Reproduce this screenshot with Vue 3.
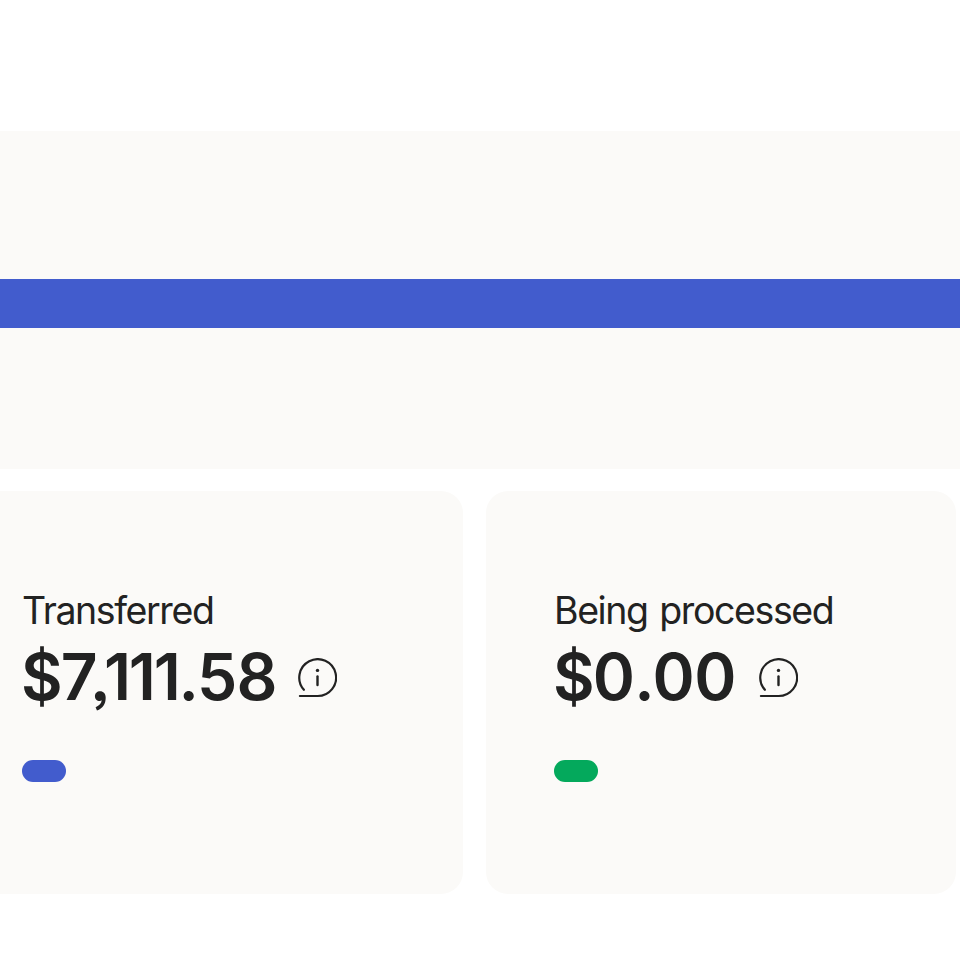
<script setup>
const cards = [
  {
    key: 'transferred',
    label: 'Transferred',
    amount: [
      { text: '$', kind: 'sign' },
      { text: '7', kind: 'lead' },
      { text: ',', kind: 'comma' },
      { text: '111', kind: 'ones' },
      { text: '.', kind: 'point' },
      { text: '58', kind: 'cents' },
    ],
  },
  {
    key: 'processing',
    label: 'Being processed',
    amount: [
      { text: '$', kind: 'sign' },
      { text: '0', kind: 'lead' },
      { text: '.', kind: 'point' },
      { text: '00', kind: 'cents' },
    ],
  },
]
</script>

<template>
  <main class="page">
    <section class="chart">
      <div class="bar"></div>
    </section>
    <section class="cards">
      <article v-for="card in cards" :key="card.key" class="card" :class="card.key">
        <div class="label">{{ card.label }}</div>
        <div class="row">
          <div class="amount"><span v-for="(part, i) in card.amount" :key="i" :class="part.kind">{{ part.text }}</span></div>
          <svg class="info" viewBox="0 0 40 40" fill="none" stroke="#222" stroke-width="2.2" stroke-linecap="round">
            <path d="M6.9 31.8A18.4 18.4 0 1 1 20.5 38H2.9" />
            <path d="M20.5 18.4v8.6" stroke-width="2.4" />
            <circle cx="20.5" cy="12.4" r="1.7" fill="#222" stroke="none" />
          </svg>
        </div>
        <div class="pill"></div>
      </article>
    </section>
  </main>
</template>

<style>
body {
  background: #fff;
}
</style>

<style scoped>
.page {
  width: 960px;
  height: 960px;
  box-sizing: border-box;
  padding-top: 131px;
  overflow: hidden;
  background: #fff;
  color: #222;
  font-family: Inter, "Liberation Sans", sans-serif;
}
.chart {
  height: 338px;
  box-sizing: border-box;
  padding-top: 148px;
  background: #fbfaf8;
}
.bar {
  height: 49px;
  background: #425ccd;
}
.cards {
  display: grid;
  grid-template-columns: 463px 470px;
  gap: 23px;
  margin-top: 22px;
}
.card {
  height: 403px;
  box-sizing: border-box;
  padding: 96px 0 0 68px;
  border-radius: 22px;
  background: #fbfaf8;
}
.transferred {
  padding-left: 22px;
  border-top-left-radius: 0;
  border-bottom-left-radius: 0;
}
.label {
  height: 48px;
  line-height: 48px;
  font-size: 37.5px;
  letter-spacing: -1.4px;
  white-space: nowrap;
}
.processing .label {
  letter-spacing: -1.4px;
  word-spacing: 2.5px;
}
.row {
  display: flex;
  align-items: center;
  height: 84px;
}
.amount {
  width: 253px;
  line-height: 84px;
  font-size: 64px;
  font-weight: 600;
  letter-spacing: -2px;
  white-space: nowrap;
}
.sign {
  margin-left: -1px;
  letter-spacing: -2px;
}
.lead {
  letter-spacing: -7px;
}
.comma {
  font-feature-settings: "ss03" 1;
  letter-spacing: -7px;
}
.ones {
  letter-spacing: -2.2px;
}
.cents {
  letter-spacing: -0.6px;
}
.processing .lead {
  letter-spacing: -0.7px;
}
.processing .point {
  letter-spacing: -2px;
}
.processing .cents {
  letter-spacing: -0.5px;
}
.processing .amount {
  width: 182px;
}
.info {
  display: block;
  width: 40px;
  height: 40px;
  margin: 2px 0 0 22px;
  flex: none;
}
.pill {
  width: 44px;
  height: 22px;
  margin-top: 41px;
  border-radius: 11px;
  background: #425ccd;
}
.processing .pill {
  background: #04a95c;
}
</style>
